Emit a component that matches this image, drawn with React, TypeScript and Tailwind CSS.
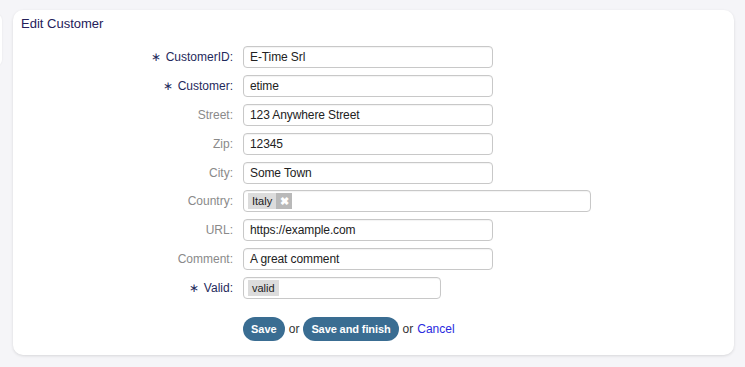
import React from "react";

type Row = { label: string; required?: boolean; value?: string; kind?: "text" | "country" | "valid" };

const rows: Row[] = [
  { label: "CustomerID:", required: true, value: "E-Time Srl" },
  { label: "Customer:", required: true, value: "etime" },
  { label: "Street:", value: "123 Anywhere Street" },
  { label: "Zip:", value: "12345" },
  { label: "City:", value: "Some Town" },
  { label: "Country:", kind: "country" },
  { label: "URL:", value: "https://example.com" },
  { label: "Comment:", value: "A great comment" },
  { label: "Valid:", required: true, kind: "valid" },
];

function Field({ row }: { row: Row }) {
  if (row.kind === "country") {
    return (
      <div className="w-[348px] h-[22px] border border-[#c8c8c8] rounded-[4px] bg-white flex items-center pl-[4px] shadow-[inset_0_1px_1px_rgba(0,0,0,0.05)]">
        <span className="flex items-stretch h-[16px]">
          <span className="bg-[#dcdcdc] text-[#222] text-[11px] leading-[16px] px-[4px]">Italy</span>
          <span className="bg-[#b9b9b9] w-[16px] flex items-center justify-center text-white text-[11px] font-bold leading-none">✖</span>
        </span>
      </div>
    );
  }
  if (row.kind === "valid") {
    return (
      <div className="w-[198px] h-[22px] border border-[#c8c8c8] rounded-[4px] bg-white flex items-center pl-[4px] shadow-[inset_0_1px_1px_rgba(0,0,0,0.05)]">
        <span className="bg-[#dcdcdc] text-[#222] text-[11px] leading-[16px] px-[4px]">valid</span>
      </div>
    );
  }
  return (
    <div className="w-[250px] h-[22px] border border-[#c8c8c8] rounded-[4px] bg-white flex items-center px-[6px] text-[12px] tracking-[-0.1px] text-[#222] shadow-[inset_0_1px_1px_rgba(0,0,0,0.05)]">
      {row.value}
    </div>
  );
}

export default function App() {
  return (
    <div className="w-[745px] h-[367px] bg-[#f5f5f8] relative overflow-hidden pt-[10px] pl-[13px]" style={{ fontFamily: '"Liberation Sans", Arial, sans-serif' }}>
      <div className="absolute left-[-12px] top-[14px] w-[14px] h-[52px] bg-white rounded-[6px] shadow-[0_0_2px_rgba(0,0,0,0.08)]" />
      <div className="w-[721px] h-[345px] bg-white rounded-[10px] shadow-[0_1px_3px_rgba(0,0,0,0.12)] pt-[6px]">
        <div className="pl-[8px] text-[13px] leading-[16px] text-[#25205a]">Edit Customer</div>
        <div className="mt-[14px] flex flex-col gap-[6.9px]">
          {rows.map((r) => (
            <div key={r.label} className="flex items-center h-[22px]">
              <div className={`w-[220px] text-right text-[12px] ${r.required ? "text-[#1f2a5c]" : "text-[#8a8a8a]"}`}>
                {r.required && <span className="mr-[5px] text-[12px]">∗</span>}
                {r.label}
              </div>
              <div className="ml-[10px]">
                <Field row={r} />
              </div>
            </div>
          ))}
        </div>
        <div className="mt-[18px] ml-[230px] flex items-center text-[12px] text-[#333]">
          <span className="h-[24px] px-[8px] rounded-full bg-[#3a6d92] text-white text-[11px] font-bold flex items-center">Save</span>
          <span className="mx-[4px]">or</span>
          <span className="h-[24px] px-[8px] rounded-full bg-[#3a6d92] text-white text-[11px] font-bold tracking-[-0.1px] flex items-center">Save and finish</span>
          <span className="mx-[4px]">or</span>
          <span className="text-[#2a2ae0]">Cancel</span>
        </div>
      </div>
    </div>
  );
}
